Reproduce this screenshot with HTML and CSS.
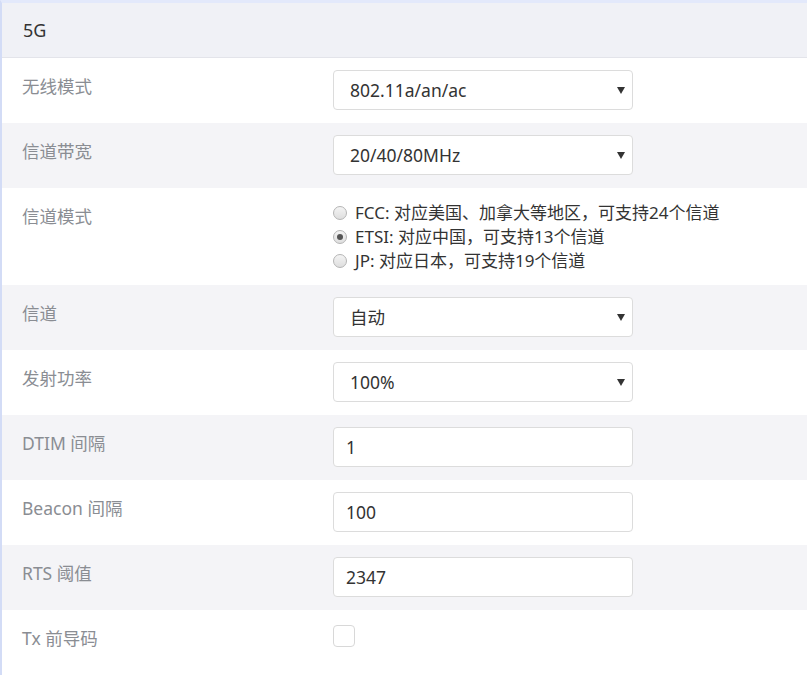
FILE: index.html
```html
<!DOCTYPE html>
<html lang="zh-CN">
<head>
    <meta charset="UTF-8">
    <title>5G 无线设置</title>
    <link rel="stylesheet" href="styles.css">
</head>
<body>
    <div class="panel">
        <div class="panel-title">5G</div>

        <div class="form-row">
            <label class="form-label">无线模式</label>
            <div class="select-wrap">
                <select class="form-select">
                    <option>802.11a/an/ac</option>
                </select>
            </div>
        </div>

        <div class="form-row">
            <label class="form-label">信道带宽</label>
            <div class="select-wrap">
                <select class="form-select">
                    <option>20/40/80MHz</option>
                </select>
            </div>
        </div>

        <div class="form-row radio-row">
            <label class="form-label">信道模式</label>
            <div class="radio-list">
                <label class="radio-item"><input type="radio" name="region">FCC: 对应美国、加拿大等地区，可支持24个信道</label>
                <label class="radio-item"><input type="radio" name="region" checked>ETSI: 对应中国，可支持13个信道</label>
                <label class="radio-item"><input type="radio" name="region">JP: 对应日本，可支持19个信道</label>
            </div>
        </div>

        <div class="form-row">
            <label class="form-label">信道</label>
            <div class="select-wrap">
                <select class="form-select">
                    <option>自动</option>
                </select>
            </div>
        </div>

        <div class="form-row">
            <label class="form-label">发射功率</label>
            <div class="select-wrap">
                <select class="form-select">
                    <option>100%</option>
                </select>
            </div>
        </div>

        <div class="form-row">
            <label class="form-label">DTIM 间隔</label>
            <input class="form-input" type="text" value="1">
        </div>

        <div class="form-row">
            <label class="form-label">Beacon 间隔</label>
            <input class="form-input" type="text" value="100">
        </div>

        <div class="form-row">
            <label class="form-label">RTS 阈值</label>
            <input class="form-input" type="text" value="2347">
        </div>

        <div class="form-row">
            <label class="form-label">Tx 前导码</label>
            <div class="check-wrap">
                <span class="check-box"></span>
            </div>
        </div>
    </div>
</body>
</html>
```

FILE: styles.css
```css
body {
    margin: 0;
    font-family: "Noto Sans", "Noto Sans CJK SC", sans-serif;
    background-color: #fff;
}

.panel {
    border-left: 2px solid #d3dcf6;
    border-top: 3px solid #e3e9fb;
    height: 672px;
    overflow: hidden;
}

.panel-title {
    height: 54px;
    line-height: 54px;
    padding-left: 21px;
    font-size: 18px;
    color: #333;
    background-color: #f0f1f6;
    border-bottom: 1px solid #e3e4ea;
}

.form-row {
    display: grid;
    grid-template-columns: 311px 300px;
    padding: 12px 0 13px 20px;
    min-height: 40px;
}

.form-row:nth-child(odd) {
    background-color: #f4f4f7;
}

.form-label {
    font-size: 17.5px;
    line-height: 24px;
    padding-top: 4px;
    color: #8a8d93;
}

.select-wrap {
    position: relative;
}

.select-wrap::after {
    content: "";
    position: absolute;
    right: 8px;
    top: 17px;
    border-left: 4px solid transparent;
    border-right: 4px solid transparent;
    border-top: 7px solid #333;
}

.form-select,
.form-input {
    box-sizing: border-box;
    width: 300px;
    height: 40px;
    border: 1px solid #dcdcdc;
    border-radius: 4px;
    background-color: #fff;
    font-family: inherit;
    font-size: 17.5px;
    color: #333;
    margin: 0;
    outline: none;
}

.form-select {
    appearance: none;
    -webkit-appearance: none;
    padding: 0 30px 0 16px;
}

.form-input {
    padding: 0 12px;
}

.radio-row {
    padding-bottom: 12px;
}

.radio-list {
    display: flex;
    flex-direction: column;
    margin-top: 1px;
}

.radio-item {
    display: flex;
    align-items: center;
    font-size: 17px;
    line-height: 24px;
    color: #333;
    white-space: nowrap;
}

.radio-item input {
    appearance: none;
    -webkit-appearance: none;
    flex-shrink: 0;
    box-sizing: border-box;
    width: 14px;
    height: 14px;
    margin: 0 8px 0 0;
    border: 1px solid #b5b5b5;
    border-radius: 50%;
    background: linear-gradient(#f4f4f4, #dedede);
    position: relative;
}

.radio-item input:checked::after {
    content: "";
    position: absolute;
    left: 3px;
    top: 3px;
    width: 6px;
    height: 6px;
    border-radius: 50%;
    background-color: #555;
}

.check-wrap {
    padding-top: 3px;
}

.check-box {
    display: block;
    width: 20px;
    height: 20px;
    border: 1px solid #d8d8d8;
    border-radius: 4px;
    background-color: #fff;
}
```
